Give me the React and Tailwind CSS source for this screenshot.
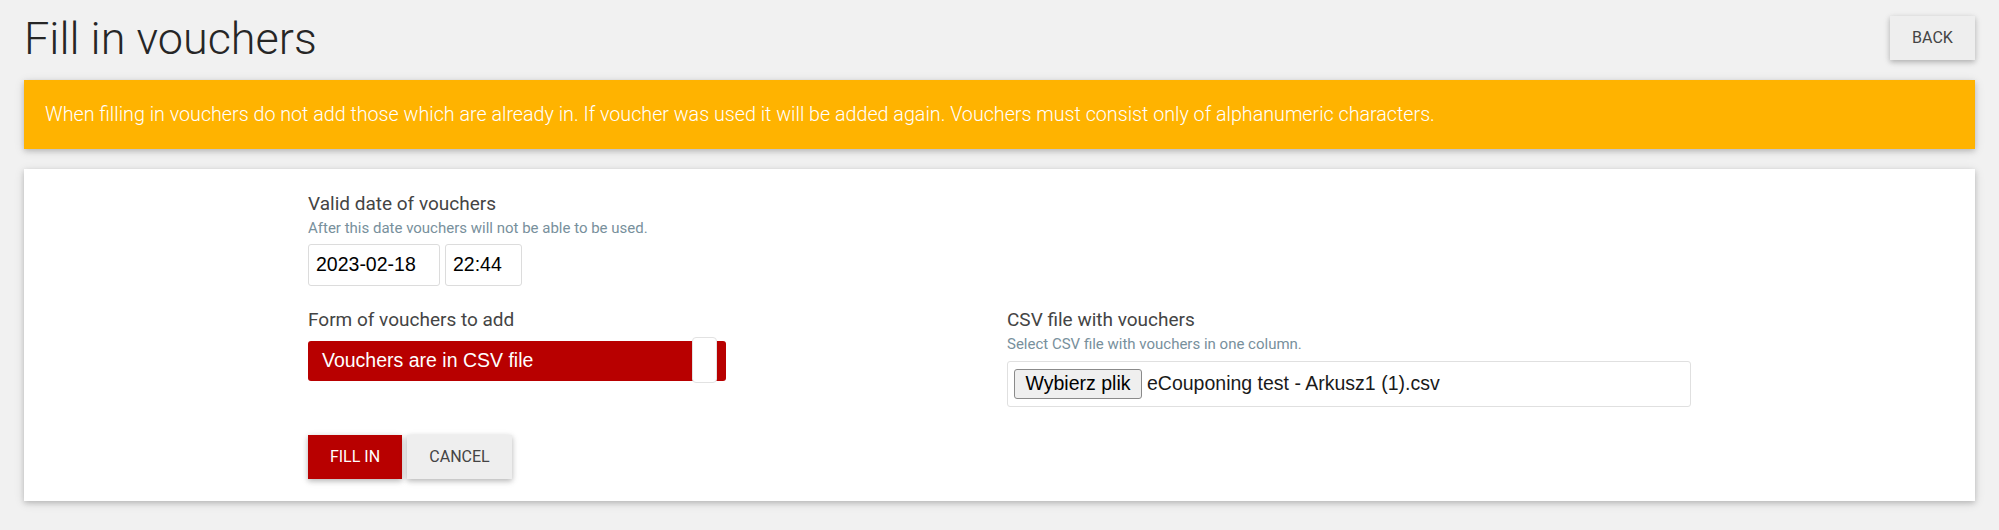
import React from 'react';

const roboto = "font-['Roboto',sans-serif]";
const sysFont = "font-['Liberation_Sans',Arial,sans-serif]";

const FillInVouchers = () => {
    return (
        <div className={`min-h-[530px] bg-[#f1f1f1] px-6 ${roboto}`}>
            {/* Header */}
            <div className="flex h-[80px] items-start justify-between pt-[12px]">
                <h1 className="text-[45px] font-light leading-[54px] text-[#262626]">Fill in vouchers</h1>
                <button className="mt-[4px] h-[44px] w-[85px] bg-[#eeeeee] text-[16px] uppercase text-[#444] shadow-[0_2px_5px_rgba(0,0,0,0.2),0_2px_8px_rgba(0,0,0,0.1)]">
                    Back
                </button>
            </div>

            {/* Warning */}
            <div className="flex h-[69px] items-center bg-[#ffb300] px-[21px] shadow-[0_2px_5px_rgba(0,0,0,0.16),0_2px_10px_rgba(0,0,0,0.12)]">
                <p className="text-[19.7px] font-light text-white">
                    When filling in vouchers do not add those which are already in. If voucher was used it will be added again. Vouchers must consist only of alphanumeric characters.
                </p>
            </div>

            {/* Form card */}
            <div className="mt-[20px] h-[332px] bg-white pt-[23px] shadow-[0_2px_5px_rgba(0,0,0,0.16),0_2px_10px_rgba(0,0,0,0.12)]">
                <div className="mx-auto w-[1383px]">
                    <div className="grid grid-cols-2 gap-x-[15px]">
                        <div>
                            <div className="text-[19px] leading-[24px] text-[#444]">Valid date of vouchers</div>
                            <div className="mt-[4px] text-[15px] leading-[17px] text-[#78909c]">After this date vouchers will not be able to be used.</div>
                            <div className={`mt-[7px] flex gap-[5px] ${sysFont}`}>
                                <div className="flex h-[42px] w-[132px] items-center rounded-[3px] border border-[#dcdcdc] pl-[7px] text-[19.5px] text-black">2023-02-18</div>
                                <div className="flex h-[42px] w-[77px] items-center rounded-[3px] border border-[#dcdcdc] pl-[7px] text-[19.5px] text-black">22:44</div>
                            </div>
                        </div>
                        <div></div>

                        <div className="mt-[22px]">
                            <div className="text-[19px] leading-[24px] text-[#444]">Form of vouchers to add</div>
                            <div className={`relative mt-[9px] flex h-[40px] w-[418px] items-center rounded-[3px] bg-[#b80000] pl-[14px] text-[19.5px] text-white ${sysFont}`}>
                                Vouchers are in CSV file
                                <div className="absolute left-[384px] top-[-4px] h-[46px] w-[25px] rounded-[4px] border border-[#e2e2e2] bg-white"></div>
                            </div>
                        </div>
                        <div className="mt-[22px]">
                            <div className="text-[19px] leading-[24px] text-[#444]">CSV file with vouchers</div>
                            <div className="mt-[4px] text-[15px] leading-[17px] text-[#78909c]">Select CSV file with vouchers in one column.</div>
                            <div className={`mt-[8px] flex h-[46px] items-center rounded-[3px] border border-[#e0e0e0] pl-[6px] ${sysFont}`}>
                                <div className="flex h-[30px] w-[128px] items-center justify-center rounded-[3px] border border-[#8a8a8a] bg-[#efefef] text-[19.5px] text-black">Wybierz plik</div>
                                <span className="ml-[5px] text-[19.5px] text-[#1a1a1a]">eCouponing test - Arkusz1 (1).csv</span>
                            </div>
                        </div>
                    </div>

                    {/* Actions */}
                    <div className="mt-[28px] flex gap-[5px]">
                        <button className="h-[44px] w-[94px] bg-[#b80000] text-[16px] uppercase text-white shadow-[0_2px_5px_rgba(0,0,0,0.2),0_2px_8px_rgba(0,0,0,0.12)]">
                            Fill in
                        </button>
                        <button className="h-[44px] w-[105px] bg-[#eeeeee] text-[16px] uppercase text-[#444] shadow-[0_2px_5px_rgba(0,0,0,0.2),0_2px_8px_rgba(0,0,0,0.12)]">
                            Cancel
                        </button>
                    </div>
                </div>
            </div>
        </div>
    );
};

export default function App() {
    return <FillInVouchers />;
}
